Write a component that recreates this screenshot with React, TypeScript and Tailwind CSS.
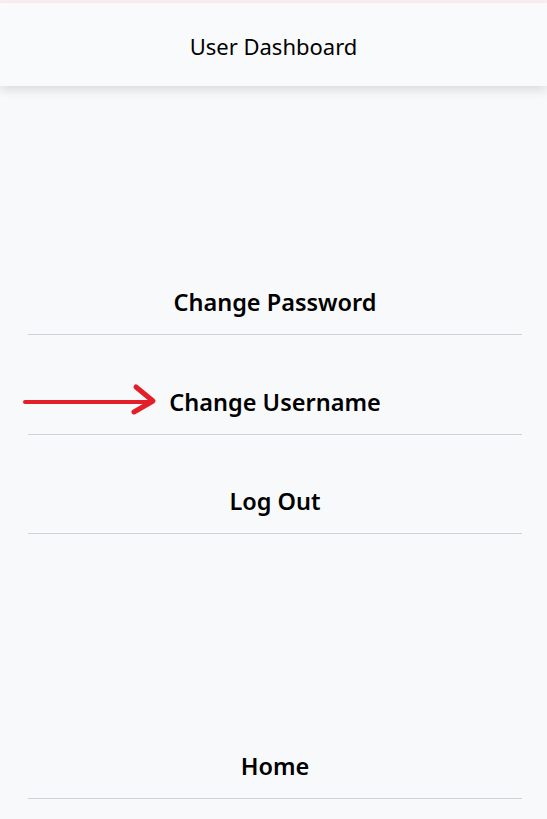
const items = [
  { label: "Change Password", gap: "" },
  { label: "Change Username", gap: "mt-[52px]" },
  { label: "Log Out", gap: "mt-[51px]" },
  { label: "Home", gap: "mt-[217px]" },
];

function Arrow() {
  return (
    <svg
      className="pointer-events-none absolute left-[22px] top-[383px]"
      width="136"
      height="34"
      viewBox="0 0 136 34"
      fill="none"
    >
      <path d="M3 19 L128 19" stroke="#e3202a" strokeWidth="4" strokeLinecap="round" />
      <path
        d="M114 4 L131 18 L112 29"
        stroke="#e3202a"
        strokeWidth="5"
        strokeLinecap="round"
        strokeLinejoin="round"
      />
    </svg>
  );
}

export default function App() {
  return (
    <div
      className="relative min-h-[819px] bg-[#f8f9fb] text-black"
      style={{ fontFamily: '"Noto Sans", "Open Sans", sans-serif' }}
    >
      <div className="h-[3px] bg-[#fdeef1]" />
      <header className="flex h-[83px] items-center justify-center bg-[#f9fafb] pt-[4px] shadow-[0_4px_10px_rgba(0,0,0,0.12)]">
        <h1 className="text-[22px] font-normal">User Dashboard</h1>
      </header>

      <nav className="ml-[28px] w-[494px] pt-[201px]">
        {items.map(({ label, gap }) => (
          <a
            key={label}
            href="#"
            className={
              gap +
              " block border-b border-[#cfd2d6] pb-[17px] text-center text-[23.5px] leading-[30px] font-semibold"
            }
          >
            {label}
          </a>
        ))}
      </nav>

      <Arrow />
    </div>
  );
}
